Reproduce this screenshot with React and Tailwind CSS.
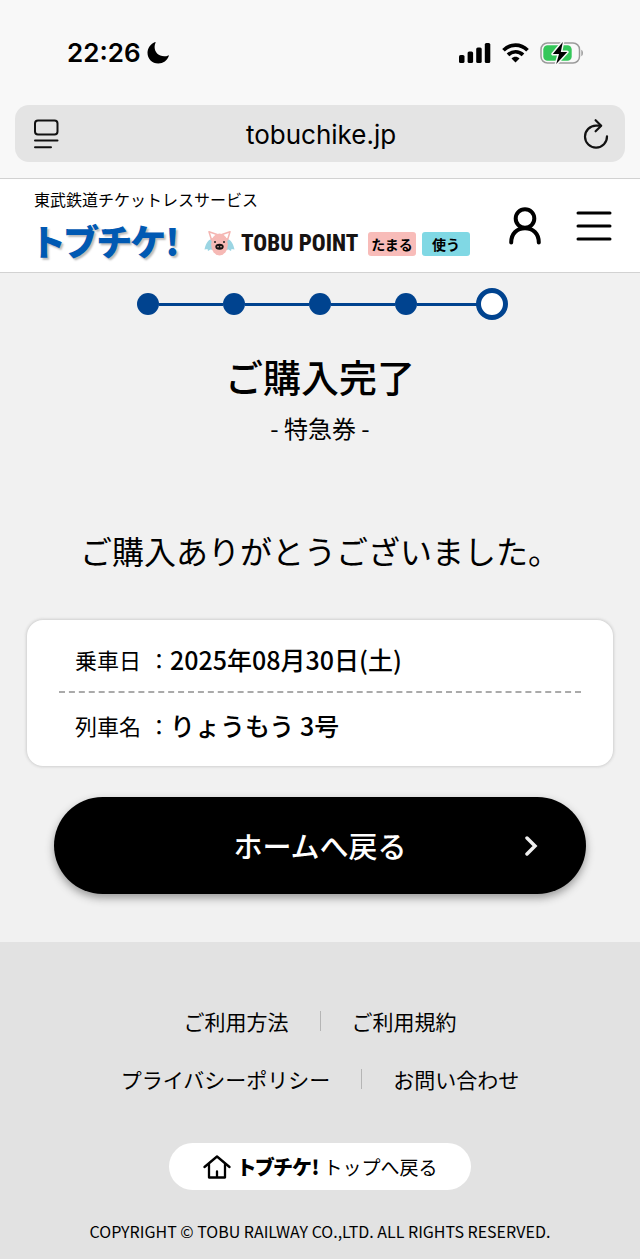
const steps = [1, 2, 3, 4];

const details = [
  { label: "乗車日", value: "2025年08月30日(土)" },
  { label: "列車名", value: "りょうもう 3号" },
];

function StatusBar() {
  return (
    <div className="flex items-center justify-between pl-[67px] pr-[56px] h-[105px]">
      <div className="flex items-center gap-1.5 font-['Inter',sans-serif]">
        <span className="text-[26px] leading-8 font-semibold">22:26</span>
        <svg width="22" height="22" viewBox="0 0 22 22" aria-hidden="true">
          <path
            d="M8.6 .6C7.9 2 7.6 3.5 7.6 5c0 5.4 4.2 9.3 9.6 9.3 1.5 0 2.9-.3 4-.9.5-.2.8 0 .6.6C20.300 18.400 16.200 21.500 11.300 21.500 5.100 21.500.500 16.900.500 10.800.500 6.200 3.400 1.900 7.700.200c.700-.2 1.100 0 .9.4z"
            fill="#000"
          />
        </svg>
      </div>
      <div className="flex items-center gap-[11px]">
        <svg width="32" height="20" viewBox="0 0 32 20" aria-hidden="true">
          <rect x="0" y="12" width="5.500" height="8" rx="1.600" />
          <rect x="8.600" y="8.500" width="5.500" height="11.500" rx="1.600" />
          <rect x="17.200" y="4.500" width="5.500" height="15.500" rx="1.600" />
          <rect x="25.800" y="0" width="5.500" height="20" rx="1.600" />
        </svg>
        <svg width="27" height="20" viewBox="0 0 27 20" aria-hidden="true">
          <g fill="none" stroke="#000" strokeWidth="3.700">
            <path d="M1.500 7.200C8.200.300 18.800.300 25.500 7.200" />
            <path d="M6 11.900C10.200 7.700 16.800 7.700 21 11.900" />
          </g>
          <path d="M13.500 19.400l-4-4c2.200-2.100 5.800-2.100 8 0z" />
        </svg>
        <svg width="44" height="24" viewBox="0 0 44 24" aria-hidden="true">
          <rect x="1" y="2" width="38.500" height="20" rx="6.500" fill="none" stroke="#9b9b9b" strokeWidth="1.500" />
          <path d="M41.300 8.800c2.200.9 2.200 5.500 0 6.400z" fill="#9b9b9b" />
          <rect x="3.300" y="4.300" width="28.400" height="15.400" rx="4.300" fill="#34c759" />
          <path
            d="M22.800 1L12.800 13h6.200l-2.800 10L27.200 11h-6.400z"
            fill="#000"
            stroke="#f8f8f8"
            strokeWidth="3"
            paintOrder="stroke"
            strokeLinejoin="round"
          />
        </svg>
      </div>
    </div>
  );
}

function AddressBar() {
  return (
    <div className="px-[15px] pb-4">
      <div className="flex h-[57px] items-center rounded-[14px] bg-[#e4e4e4] pl-[18px] pr-4">
        <button type="button" aria-label="ページメニュー">
          <svg width="26" height="30" viewBox="0 0 26 30" fill="none" stroke="#111" strokeWidth="2" strokeLinecap="round">
            <rect x="2" y="1.500" width="22.500" height="14" rx="3" />
            <path d="M2 21.500h22.500M2 28.200h16" />
          </svg>
        </button>
        <input
          aria-label="アドレス"
          defaultValue="tobuchike.jp"
          className="min-w-0 flex-1 bg-transparent pt-0.5 text-center font-['Inter',sans-serif] text-[26px] leading-8 outline-none"
        />
        <button type="button" aria-label="再読み込み">
          <svg width="26" height="32" viewBox="0 0 26 32" fill="none" stroke="#111" strokeWidth="2.200" strokeLinecap="round" strokeLinejoin="round">
            <path d="M17.500 7.600H13A11 11 0 1 0 24 18.300" />
            <path d="M12.600 2.200L18.200 7.700L12.600 13.300" />
          </svg>
        </button>
      </div>
    </div>
  );
}

function Pig() {
  return (
    <svg width="31" height="25" viewBox="0 0 31 25" aria-hidden="true">
      <path d="M9 8C5 8 2 11 .500 18.500l3-.500.500 2 2.500-1.500 2.500.500z" fill="#9bd5e3" />
      <path d="M22 8c4 0 7 3 8.500 10.500l-3-.500-.500 2-2.500-1.500-2.500.500z" fill="#9bd5e3" />
      <path d="M5 .800L13 3.500 7.500 9zM26 .800L18 3.500 23.500 9z" fill="#fff" stroke="#f4b5b1" strokeWidth="1.500" strokeLinejoin="round" />
      <ellipse cx="15.500" cy="13.500" rx="8.400" ry="11" fill="#f6b9b5" />
      <circle cx="11" cy="11" r="1" fill="#222" />
      <circle cx="20" cy="11" r="1" fill="#222" />
      <ellipse cx="15.500" cy="15.700" rx="4.200" ry="3" fill="#171312" />
      <circle cx="14" cy="15.700" r=".8" fill="#f6b9b5" />
      <circle cx="17" cy="15.700" r=".8" fill="#f6b9b5" />
    </svg>
  );
}

function SiteHeader() {
  return (
    <header className="flex items-center justify-between border-y border-[#d2d2d2] bg-white pl-[34px] pr-7">
      <div className="pt-2">
        <p className="text-base leading-6">東武鉄道チケットレスサービス</p>
        <div className="flex h-[61px] items-center">
          <a
            href="#top"
            className="w-[170px] whitespace-nowrap pb-1 text-[36px] leading-[56px] font-black text-[#0059b3] [font-feature-settings:'palt'] [text-shadow:2px_2px_2px_#bbb]"
          >
            トブチケ!
          </a>
          <a href="#point" className="flex items-center pt-1">
            <Pig />
            <span className="ml-1.5 w-[127px] whitespace-nowrap font-['Roboto_Condensed','Liberation_Sans_Narrow',Roboto,sans-serif] text-[23px] leading-6 font-extrabold text-[#171312]">
              TOBU POINT
            </span>
            <span className="w-12 rounded-[3px] bg-[#f8bcb9] text-center text-sm leading-6 font-bold">たまる</span>
            <span className="ml-1.5 w-12 rounded-[3px] bg-[#80d8e4] text-center text-sm leading-6 font-bold">使う</span>
          </a>
        </div>
      </div>
      <div className="flex items-center gap-[35px]">
        <button type="button" aria-label="マイページ">
          <svg width="32" height="38" viewBox="0 0 32 38" fill="none" stroke="#000" strokeWidth="4" strokeLinecap="round">
            <circle cx="16" cy="11.500" r="9.300" />
            <path d="M2.200 35.500C2.200 26.500 8 21.200 16 21.200s13.800 5.300 13.800 14.300" />
          </svg>
        </button>
        <button type="button" aria-label="メニュー">
          <svg width="36" height="30" viewBox="0 0 36 30" fill="none" stroke="#000" strokeWidth="3" strokeLinecap="round">
            <path d="M2 2h32M2 15h32M2 28h32" />
          </svg>
        </button>
      </div>
    </header>
  );
}

function Progress() {
  return (
    <div className="mx-auto flex h-8 w-[376px] items-center pl-[5px]">
      {steps.map((step) => (
        <div key={step} className="flex flex-1 items-center">
          <span className="size-[22px] rounded-full bg-[#00438f]" />
          <span className="h-[3px] flex-1 bg-[#00438f]" />
        </div>
      ))}
      <span className="-ml-[5px] size-8 rounded-full border-5 border-[#00438f] bg-white" />
    </div>
  );
}

function SiteFooter() {
  return (
    <footer className="bg-[#e2e2e2] pt-[63px] pb-4 text-center">
      <nav className="text-[21px] leading-8">
        <div className="flex items-center justify-center gap-[31px]">
          <a href="#guide">ご利用方法</a>
          <span className="h-5 w-px bg-[#b5b5b5]" />
          <a href="#terms">ご利用規約</a>
        </div>
        <div className="mt-[26px] flex items-center justify-center gap-[31px]">
          <a href="#privacy">プライバシーポリシー</a>
          <span className="h-5 w-px bg-[#b5b5b5]" />
          <a href="#contact">お問い合わせ</a>
        </div>
      </nav>
      <a href="#top" className="mx-auto mt-12 flex h-[47px] w-[302px] items-center justify-center rounded-full bg-white">
        <svg width="28" height="24" viewBox="0 0 28 24" fill="none" stroke="#000" strokeWidth="2.300" strokeLinecap="round" strokeLinejoin="round" aria-hidden="true">
          <path d="M1.500 12L14 1.500 26.500 12" />
          <path d="M6 9.500V22.500H22V9.500M14 22v-5.500" />
        </svg>
        <span className="ml-2 text-xl leading-8 font-black [font-feature-settings:'palt']">トブチケ!</span>
        <span className="ml-1 text-[19px] leading-8">トップへ戻る</span>
      </a>
      <p className="mt-[29px] text-base leading-6">COPYRIGHT © TOBU RAILWAY CO.,LTD. ALL RIGHTS RESERVED.</p>
    </footer>
  );
}

function App() {
  return (
    <div className="min-h-screen bg-[#f1f1f1] font-['Noto_Sans_CJK_JP',sans-serif] text-black">
      <div className="bg-[#f8f8f8]">
        <StatusBar />
        <AddressBar />
      </div>
      <SiteHeader />

      <main className="pt-[15px] pb-12">
        <Progress />
        <h1 className="mt-7 text-center text-[38px] leading-[56px] font-medium">ご購入完了</h1>
        <p className="mt-1.5 text-center text-2xl leading-9">- 特急券 -</p>
        <p className="mt-20 text-center text-[32px] leading-12">ご購入ありがとうございました。</p>

        <dl className="mx-[27px] mt-[46px] rounded-2xl bg-white px-8 py-2 shadow-[0_0_3px_1px_#cfcfcf]">
          {details.map((item) => (
            <div
              key={item.label}
              className="flex h-[65px] items-center border-[#aaa] pl-4 not-last:border-b-2 not-last:border-dashed"
            >
              <dt className="flex w-[95px] justify-between whitespace-nowrap text-[22px]">
                <span>{item.label}</span>
                <span>：</span>
              </dt>
              <dd className="text-[25px] font-medium">{item.value}</dd>
            </div>
          ))}
        </dl>

        <div className="mx-[54px] mt-[31px]">
          <button
            type="button"
            className="relative h-[97px] w-full rounded-full bg-black text-[29px] font-medium text-white shadow-[0_4px_8px_#999]"
          >
            ホームへ戻る
            <svg
              width="14"
              height="20"
              viewBox="0 0 14 20"
              className="absolute top-[39px] right-12"
              fill="none"
              stroke="#eee"
              strokeWidth="3.500"
              strokeLinecap="round"
              aria-hidden="true"
            >
              <path d="M3 2l8 8-8 8" />
            </svg>
          </button>
        </div>
      </main>

      <SiteFooter />
    </div>
  );
}

export default App;
